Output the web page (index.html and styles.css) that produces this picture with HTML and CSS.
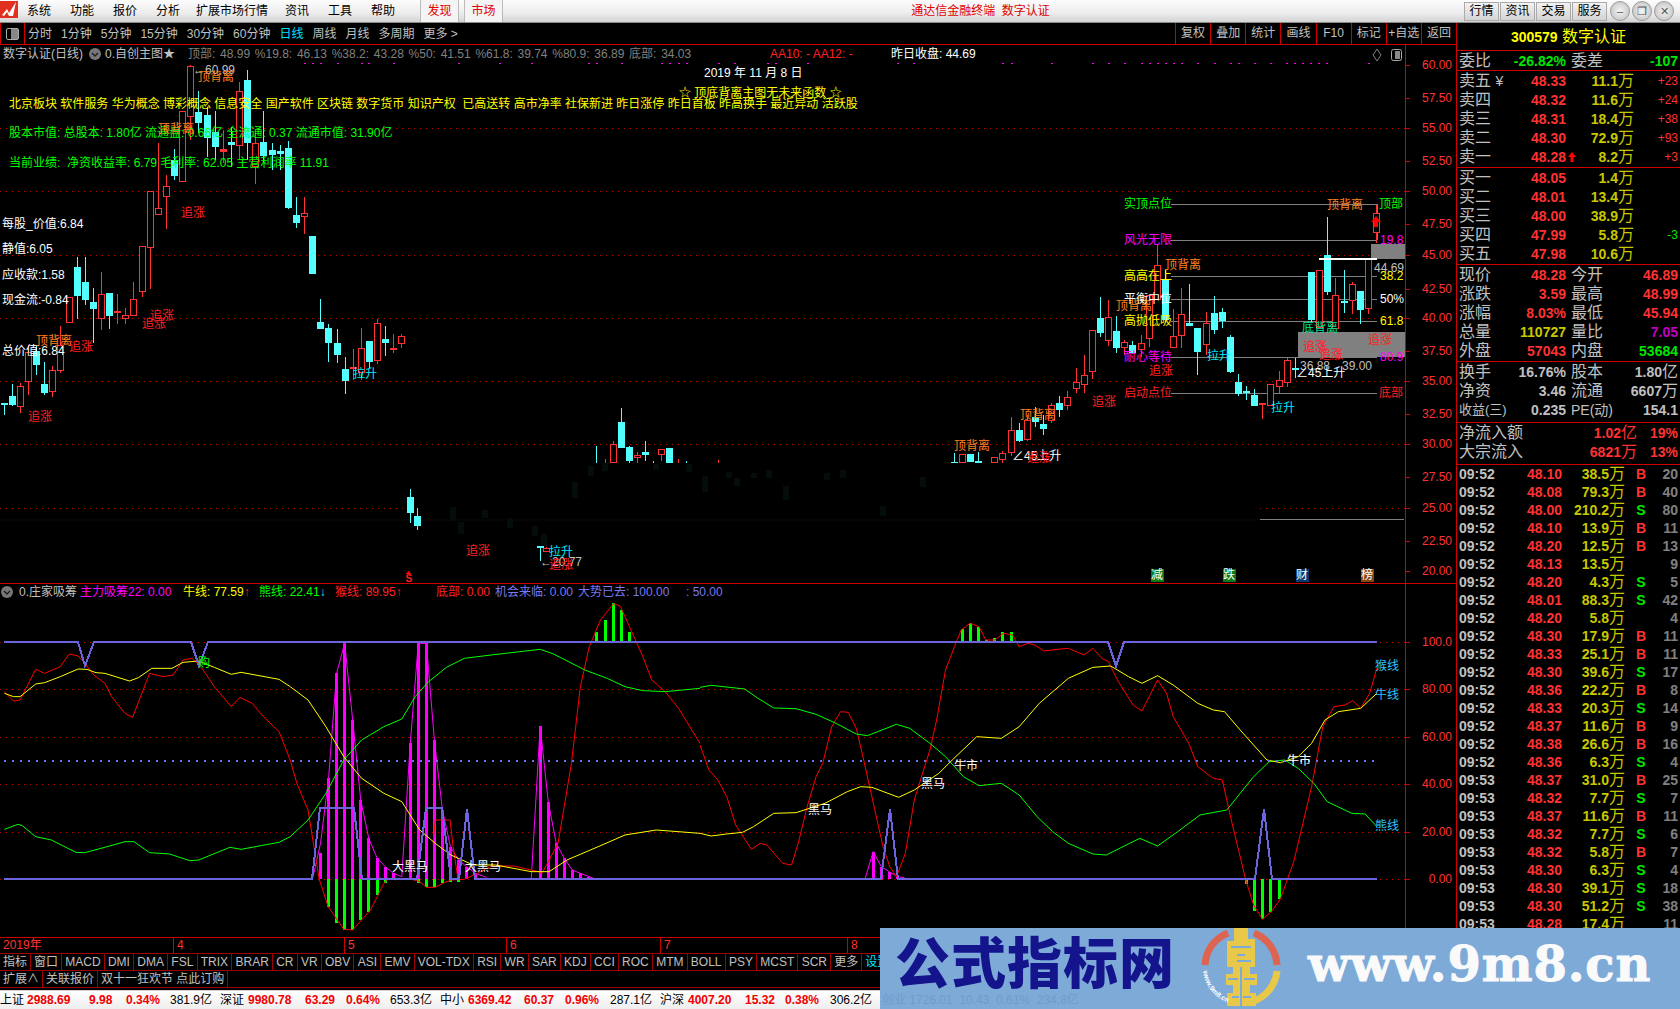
FILE: index.html
```html
<!DOCTYPE html>
<html lang="zh-CN">
<head>
<meta charset="utf-8">
<title>数字认证</title>
<link rel="stylesheet" href="styles.css">
</head>
<body>
<div class="app">
  <header class="titlebar">
    <svg class="applogo" viewBox="0 0 18 17"><rect width="18" height="17" fill="#e03020"/><path d="M2 14 L7 8 L9 12 L16 1 L13 15 L9 15 L7 11 L4 15z" fill="#fff"/></svg>
    <nav class="menu">
      <span>系统</span><span>功能</span><span>报价</span><span>分析</span><span class="menu-wide">扩展市场行情</span><span>资讯</span><span>工具</span><span>帮助</span>
    </nav>
    <span class="hot hot-first">发现</span><span class="hot">市场</span>
    <span class="apptitle">通达信金融终端&nbsp;&nbsp;数字认证</span>
    <div class="titleright">
      <span class="tbtn">行情</span><span class="tbtn">资讯</span><span class="tbtn">交易</span><span class="tbtn">服务</span>
      <span class="round">&#8211;</span><span class="round">&#10064;</span><span class="round">&#10005;</span>
    </div>
  </header>

  <div class="workspace">
    <section class="charts">
      <div class="toolbar">
        <div class="toolicon"><i></i></div>
        <div class="periods">
          <span>分时</span><span>1分钟</span><span>5分钟</span><span>15分钟</span><span>30分钟</span><span>60分钟</span><span class="on">日线</span><span>周线</span><span>月线</span><span>多周期</span><span>更多 &gt;</span>
        </div>
        <div class="toolright">
          <span>复权</span><span>叠加</span><span>统计</span><span>画线</span><span>F10</span><span>标记</span><span>+自选</span><span>返回</span>
        </div>
      </div>
      <div class="pane pane-main">
        <svg class="chart" viewBox="0 45 1456 538" width="1456" height="538">
          <path class="grid" d="M0 128.5H1405M0 191.5H1405M0 255.5H1405M0 318.5H1405M0 381.5H1405M0 444.5H1405M0 508.5H408M1260 508.5H1405"/>
          <path class="ghost" d="M450 507h6v14h-6zM458 522h6v12h-6zM482 510h6v8h-6zM507 518h6v10h-6zM532 526h6v10h-6zM541 534h6v12h-6zM572 482h6v16h-6zM588 466h6v10h-6zM602 463h6v8h-6zM653 464h6v6h-6zM686 464h6v8h-6zM702 476h6v16h-6zM726 472h6v6h-6zM734 478h6v8h-6zM751 473h6v5h-6zM766 470h6v8h-6zM783 486h6v14h-6zM824 473h6v7h-6zM840 470h6v8h-6zM880 506h6v10h-6zM920 477h6v10h-6z"/>
          <path class="ghost-line" d="M0 520H1260"/>
          <path class="level" d="M1171 204.5H1377V240M1171 240.5H1377M1171 276.5H1377M1171 299.5H1377M1171 321.5H1377M1171 357.5H1377M1171 393.5H1377"/>
          <path class="wr" d="M20.5 383V413M28.5 345V395M52.5 366V397M60.5 326V373M101.5 272V330M117.5 294V324M125.5 308V324M133.5 282V315M142.5 246V297M150.5 191V289M158.5 143V215M166.5 175V229M182.5 112V182M190.5 65V140M223.5 130V163M239.5 82V160M255.5 133V184M304.5 197V234M353.5 349V380M361.5 328V380M377.5 319V364M393.5 334V353M401.5 334V348M546.5 547V552M605.5 459V463M613.5 441V463M637.5 452V463M661.5 449V461M678.5 459V463M718.5 460V463M962.5 454V463M994.5 457V463M1002.5 451V463M1011.5 417V456M1027.5 415V441M1051.5 403V423M1067.5 391V410M1076.5 368V393M1084.5 355V393M1092.5 330V379M1108.5 300V346M1124.5 340V355M1141.5 335V357M1149.5 295V347M1157.5 245V300M1173.5 309V347M1181.5 288V348M1206.5 312V355M1262.5 404V419M1270.5 384V405M1279.5 371V393M1287.5 358V387M1319.5 270V327M1335.5 278V328M1352.5 282V314M1368.5 259V314M1376.5 205V243"/>
          <path class="wc" d="M4.5 404V415M12.5 384V406M36.5 345V375M44.5 362V395M77.5 257V319M85.5 257V305M93.5 288V343M109.5 293V329M174.5 149V180M198.5 91V133M207.5 107V157M215.5 111V160M231.5 127V167M247.5 70V160M263.5 111V163M272.5 143V170M280.5 145V170M288.5 141V209M296.5 197V228M320.5 299V329M328.5 324V362M337.5 329V363M345.5 357V394M369.5 341V368M385.5 326V356M410.5 489V523M417.5 508V530M540.5 547V561M596.5 446V463M621.5 408V448M629.5 446V463M645.5 441V461M653.5 461V463M686.5 461V463M954.5 453V463M978.5 452V463M1019.5 423V442M1035.5 407V427M1043.5 415V435M1059.5 396V417M1100.5 297V337M1116.5 316V353M1132.5 341V354M1165.5 270V322M1189.5 284V326M1197.5 328V375M1214.5 296V334M1222.5 308V328M1230.5 335V373M1238.5 374V396M1246.5 386V400M1254.5 389V406M1295.5 358V378M1327.5 217V295M1344.5 270V313M1360.5 291V324M1311.5 272V322"/>
          <path class="br" d="M17.5 386.5h6v20h-6zM25.5 352.5h6v29h-6zM49.5 370.5h6v21h-6zM57.5 345.5h6v25h-6zM66.5 297.5h6v25h-6zM98.5 294.5h6v24h-6zM122.5 315.5h6v3h-6zM130.5 299.5h6v16h-6zM139.5 246.5h6v45h-6zM147.5 191.5h6v56h-6zM155.5 208.5h6v6h-6zM163.5 186.5h6v10h-6zM179.5 111.5h6v70h-6zM187.5 66.5h6v50h-6zM236.5 91.5h6v54h-6zM252.5 143.5h6v23h-6zM301.5 213.5h6v3h-6zM358.5 348.5h6v24h-6zM374.5 323.5h6v37h-6zM398.5 336.5h6v7h-6zM543.5 548.5h6v3h-6zM610.5 444.5h6v18h-6zM634.5 455.5h6v2h-6zM658.5 449.5h6v5h-6zM959.5 454.5h6v8h-6zM991.5 457.5h6v5h-6zM999.5 453.5h6v6h-6zM1008.5 430.5h6v22h-6zM1024.5 420.5h6v19h-6zM1048.5 405.5h6v15h-6zM1064.5 397.5h6v8h-6zM1073.5 382.5h6v6h-6zM1081.5 375.5h6v9h-6zM1089.5 330.5h6v41h-6zM1105.5 317.5h6v23h-6zM1121.5 342.5h6v5h-6zM1138.5 343.5h6v6h-6zM1146.5 295.5h6v43h-6zM1154.5 265.5h6v34h-6zM1170.5 336.5h6v11h-6zM1178.5 314.5h6v21h-6zM1203.5 323.5h6v21h-6zM1267.5 384.5h6v21h-6zM1276.5 380.5h6v6h-6zM1284.5 360.5h6v22h-6zM1316.5 270.5h6v57h-6zM1332.5 295.5h6v33h-6zM1349.5 284.5h6v16h-6zM1365.5 259.5h6v49h-6zM1373.5 213.5h6v19h-6z"/>
          <path class="fr" d="M114 311h7v2h-7zM220 149h7v3h-7zM350 367h7v2h-7zM390 348h7v2h-7zM1259 403h7v2h-7z"/>
          <path class="bc" d="M1 403h7v2H1zM9 396h7v9H9zM33 351h7v14h-7zM41 384h7v9h-7zM74 267h7v29h-7zM82 282h7v18h-7zM90 302h7v7h-7zM106 293h7v23h-7zM171 160h7v16h-7zM195 112h7v11h-7zM204 115h7v23h-7zM212 132h7v15h-7zM228 142h7v3h-7zM244 80h7v63h-7zM260 142h7v14h-7zM269 150h7v5h-7zM277 151h7v3h-7zM285 148h7v60h-7zM293 215h7v8h-7zM309 236h7v38h-7zM317 322h7v7h-7zM325 328h7v15h-7zM334 343h7v12h-7zM342 369h7v12h-7zM366 341h7v21h-7zM382 339h7v4h-7zM407 497h7v16h-7zM414 516h7v10h-7zM537 546h7v2h-7zM618 422h7v26h-7zM626 447h7v14h-7zM642 452h7v3h-7zM666 448h7v15h-7zM951 462h7v1h-7zM967 454h7v8h-7zM975 461h7v2h-7zM1016 430h7v11h-7zM1032 417h7v5h-7zM1040 424h7v5h-7zM1056 403h7v7h-7zM1097 318h7v15h-7zM1113 331h7v17h-7zM1129 345h7v8h-7zM1162 280h7v40h-7zM1186 323h7v3h-7zM1194 328h7v24h-7zM1211 313h7v17h-7zM1219 312h7v9h-7zM1227 337h7v35h-7zM1235 382h7v12h-7zM1243 391h7v2h-7zM1251 395h7v11h-7zM1292 368h7v2h-7zM1308 272h7v48h-7zM1324 255h7v37h-7zM1341 301h7v2h-7zM1357 291h7v19h-7z"/>
          <rect class="shade" x="1371" y="244" width="34" height="15"/>
          <rect class="shade" x="1298" y="332" width="107" height="25"/>
          <path class="whiteline" d="M1319 258.5H1377"/>
          <path class="graybar" d="M1260 519.5H1404"/>
          <path class="uparrow" d="M1371 222L1376 216L1381 222H1378V227H1374V222z"/>
          <path class="magdots" d="M304 63.5h2M312 63.5h2M320 63.5h2M337 63.5h2M361 63.5h2M368 63.5h2M393 63.5h2M458 63.5h2M499 63.5h2M531 63.5h2M588 63.5h2M596 63.5h2M621 63.5h2M661 63.5h2M669 63.5h2M678 63.5h2M686 63.5h2M718 63.5h2M734 63.5h2M767 63.5h2M775 63.5h2M807 63.5h2M897 63.5h2M913 63.5h2M1002 63.5h2M1011 63.5h2M1051 63.5h2M1092 63.5h2M1108 63.5h2M1124 63.5h2M1141 63.5h2M1149 63.5h2M1157 63.5h2M1165 63.5h2M1173 63.5h2M1181 63.5h2M1197 63.5h2M1214 63.5h2M1230 63.5h2M1238 63.5h2M1254 63.5h2M1270 63.5h2M1286 63.5h2M1294 63.5h2M1302 63.5h2M1310 63.5h2M1318 63.5h2M1326 63.5h2M1368 63.5h2"/>
          <path class="axis" d="M1405.5 45V583M1405 65.5h5M1405 98.5h5M1405 128.5h5M1405 161.5h5M1405 191.5h5M1405 224.5h5M1405 255.5h5M1405 289.5h5M1405 318.5h5M1405 351.5h5M1405 381.5h5M1405 414.5h5M1405 444.5h5M1405 477.5h5M1405 508.5h5M1405 541.5h5M1405 571.5h5"/>
          <g class="txt">
            <text class="gy" x="3" y="54">数字认证(日线)</text>
            <circle class="knob" cx="95" cy="54" r="6"/><path class="knob-mark" d="M92 53l3 3 3-3"/>
            <text class="gy" x="105" y="54">0.自创主图★</text>
            <text class="dim" x="188" y="54">顶部: 48.99 %19.8: 46.13 %38.2: 43.28 %50: 41.51 %61.8: 39.74 %80.9: 36.89 底部: 34.03</text>
            <text class="rd" x="770" y="54">AA10: - AA12: -</text>
            <text class="wh" x="891" y="54">昨日收盘: 44.69</text>
            <path class="diamond" d="M1377 49l4 6-4 6-4-6z"/>
            <rect class="miniicon" x="1391.5" y="49.5" width="10" height="11" rx="2"/><rect class="miniicon-in" x="1395" y="51" width="5" height="8"/>
            <text class="wh" x="704" y="73">2019 年 11 月 8 日</text>
            <text class="ye" x="679" y="93">☆ 顶底背离主图无未来函数 ☆</text>
            <text class="ye" x="9" y="104">北京板块 软件服务 华为概念 博彩概念 信息安全 国产软件 区块链 数字货币 知识产权&#160;&#160;已高送转 高市净率 社保新进 昨日涨停 昨日首板 昨高换手 最近异动 活跃股</text>
            <text class="gr" x="9" y="133">股本市值: 总股本: 1.80亿 流通盘: 0.66亿 全流通: 0.37 流通市值: 31.90亿</text>
            <text class="gr" x="9" y="163">当前业绩:&#160;&#160;净资收益率: 6.79 毛利率: 62.05 主营利润率 11.91</text>
            <text class="gy" x="193" y="70">←60.99</text>
            <text class="or" x="198" y="77">顶背离</text>
            <text class="or" x="158" y="129">顶背离</text>
            <text class="rd" x="181" y="213">追涨</text>
            <text class="wh" x="2" y="224">每股_价值:6.84</text>
            <text class="wh" x="2" y="249">静值:6.05</text>
            <text class="wh" x="2" y="275">应收款:1.58</text>
            <text class="wh" x="2" y="300">现金流:-0.84</text>
            <text class="wh" x="2" y="351">总价值:6.84</text>
            <text class="or" x="36" y="341">顶背离</text>
            <text class="rd" x="69" y="347">追涨</text>
            <text class="rd" x="28" y="417">追涨</text>
            <text class="rd" x="142" y="324">追涨</text>
            <text class="rd" x="150" y="316">追涨</text>
            <text class="cy" x="353" y="374">拉升</text>
            <text class="rd" x="466" y="551">追涨</text>
            <text class="cy" x="549" y="552">拉升</text>
            <text class="gy" x="540" y="562">←20.77</text>
            <text class="rd" x="549" y="565">追涨</text>
            <path class="uparrow" d="M408.5 571l3 3h-6z"/>
            <text class="rd rd-bold" x="405.5" y="578">S</text>
            <text class="or" x="954" y="446">顶背离</text>
            <text class="wh" x="1012" y="456">∠45上升</text>
            <text class="rd" x="1027" y="458">追涨</text>
            <text class="or" x="1020" y="415">顶背离</text>
            <text class="rd" x="1092" y="402">追涨</text>
            <text class="rd" x="1149" y="371">追涨</text>
            <text class="or" x="1116" y="306">顶背离</text>
            <text class="or" x="1165" y="265">顶背离</text>
            <text class="or" x="1327" y="205">顶背离</text>
            <text class="gr" x="1124" y="204">实顶点位</text>
            <text class="mg" x="1124" y="240">风光无限</text>
            <text class="ye" x="1124" y="276">高高在上</text>
            <text class="wh" x="1124" y="299">平衡中位</text>
            <text class="ye" x="1124" y="321">高抛低吸</text>
            <text class="mg" x="1124" y="357">耐心等待</text>
            <text class="rd" x="1124" y="393">启动点位</text>
            <text class="gr" x="1379" y="204">顶部</text>
            <text class="mg" x="1380" y="240">19.8</text>
            <text class="gy" x="1374" y="268">44.69</text>
            <text class="ye" x="1380" y="276">38.2</text>
            <text class="wh" x="1380" y="299">50%</text>
            <text class="ye" x="1380" y="321">61.8</text>
            <text class="mg" x="1380" y="357">80.9</text>
            <text class="rd" x="1379" y="393">底部</text>
            <text class="teal" x="1302" y="328">底背离</text>
            <text class="rd" x="1303" y="347">追涨</text>
            <text class="rd" x="1319" y="355">追涨</text>
            <text class="rd" x="1368" y="340">追涨</text>
            <text class="cy" x="1207" y="356">拉升</text>
            <text class="gy" x="1300" y="366">36.88</text>
            <text class="gy" x="1342" y="366">39.00</text>
            <text class="wh" x="1296" y="373">∠45上升</text>
            <text class="cy" x="1271" y="408">拉升</text>
            <rect class="tagg" x="1151" y="569" width="13" height="13"/><text class="tagt" x="1151" y="575">减</text>
            <rect class="tagg" x="1223" y="569" width="13" height="13"/><text class="tagt" x="1223" y="575">跌</text>
            <rect class="tagb" x="1296" y="569" width="13" height="13"/><text class="tagt" x="1296" y="575">财</text>
            <rect class="tago" x="1361" y="569" width="13" height="13"/><text class="tagt" x="1361" y="575">榜</text>
            <text class="ax" x="1452" y="65">60.00</text><text class="ax" x="1452" y="98">57.50</text><text class="ax" x="1452" y="128">55.00</text><text class="ax" x="1452" y="161">52.50</text><text class="ax" x="1452" y="191">50.00</text><text class="ax" x="1452" y="224">47.50</text><text class="ax" x="1452" y="255">45.00</text><text class="ax" x="1452" y="289">42.50</text><text class="ax" x="1452" y="318">40.00</text><text class="ax" x="1452" y="351">37.50</text><text class="ax" x="1452" y="381">35.00</text><text class="ax" x="1452" y="414">32.50</text><text class="ax" x="1452" y="444">30.00</text><text class="ax" x="1452" y="477">27.50</text><text class="ax" x="1452" y="508">25.00</text><text class="ax" x="1452" y="541">22.50</text><text class="ax" x="1452" y="571">20.00</text>
          </g>
        </svg>
      </div>

      <div class="pane pane-ind">
        <svg class="chart" viewBox="0 584 1456 353" width="1456" height="353">
          <path class="grid" d="M0 642.5H1405M0 689.5H1405M0 737.5H1405M0 784.5H1405M0 832.5H1405M0 879.5H1405"/>
          <g transform="translate(0 580) scale(.44643 .33333)">
            <path class="bar-m" d="M718 897V820M736 897V595M754 897V280M772 897V190M790 897V420M808 897V660M826 897V775M845 897V835M863 897V860M881 897V880M919 897V490M937 897V190M955 897V190M973 897V480M991 897V690M1009 897V800M1027 897V840M1045 897V860M1065 897V880M1210 897V438M1228 897V665M1246 897V790M1264 897V835M1282 897V870M1300 897V880M1318 897V890"/>
            <path class="ln-m" d="M700 897L718 790L736 595L754 280L772 190L790 420L808 660L826 775L845 835L863 860L881 880L900 890L919 490L937 190L955 190L973 480L991 690L1009 800L1027 840L1045 860L1065 880L1090 892M1190 897L1210 438L1228 665L1246 790L1264 835L1282 870L1300 880L1330 895"/>
            <path class="bar-g" d="M736 897V980M754 897V1030M772 897V1050M790 897V1050M808 897V1020M826 897V995M845 897V945M863 897V910M937 897V908M955 897V922M973 897V922M991 897V908M1009 897V905M1027 897V905M1337 186V155M1356 186V120M1374 186V70M1392 186V90M1410 186V155"/>
            <path class="ln-r" d="M970 790L975 720L1008 720L1015 800L1025 890M10 335L30 363L45 360L80 268L100 280L135 260L155 222L175 228L190 250L210 285L235 310L250 350L280 400L297 412L335 280L365 290L388 285L410 240L430 235L450 260L480 320L518 380L537 352L565 370L590 410L625 455L650 540L665 610L690 690L715 897L735 980L770 1048L790 1050L810 1020L830 990L860 910L870 897L920 897L940 905L955 922L975 922L995 908L1010 900L1040 898L1070 880L1100 858L1150 858L1190 870L1215 878L1250 790L1280 550L1300 320L1320 200L1345 120L1375 70L1390 80L1410 140L1440 230L1460 300L1490 335L1520 385L1568 490"/>
            <path class="ln-g" d="M10 748L40 733L50 737L80 770L115 780L170 817L190 818L240 800L280 785L300 785L335 818L380 822L425 842L445 840L515 802L540 808L625 787L650 770L690 720L730 640L770 540L810 480L860 440L900 417L930 350L960 305L1000 262L1040 235L1100 225L1210 208L1240 222L1310 270L1360 295L1400 320L1440 332L1490 335L1568 325"/>
            <path class="ln-y" d="M10 340L30 350L45 350L80 312L100 308L135 290L175 267L195 268L215 278L235 280L290 303L310 293L340 265L385 265L410 247L445 243L480 262L518 283L540 277L625 298L650 320L690 360L730 440L770 530L810 595L860 640L900 665L940 750L975 790L1010 825L1060 855L1110 855L1190 875L1230 875L1270 840L1340 800L1400 765L1470 750L1568 760"/>
          </g>
          <g transform="translate(700 580) scale(.44643 .33333)">
            <path class="bar-m" d="M388 897V815M406 897V860M424 897V875M442 897V890"/>
            <path class="ln-m" d="M370 895L388 815L406 860L424 875L442 890L458 893"/>
            <path class="bar-g" d="M587 186V147M605 186V130M623 186V140M641 186V180M659 186V175M677 186V155M697 186V157M1224 897V912M1242 897V993M1260 897V1018M1278 897V995M1298 897V957"/>
            <path class="ln-r" d="M0 495L20 570L40 600L60 650L80 735L115 808L135 790L150 795L185 850L205 855L220 790L240 680L260 590L275 550L295 440L315 395L332 397L350 445L365 530L385 650L410 800L425 860L440 890L460 820L480 660L515 510L530 420L550 270L570 200L585 150L605 130L625 140L640 180L660 180L680 160L700 165L715 200L735 190L750 195L770 213L800 208L825 205L860 225L880 205L900 235L915 245L935 300L970 375L990 393L1025 300L1045 340L1060 410L1095 490L1115 560L1150 595L1170 600L1190 720L1222 897L1240 975L1260 1018L1280 995L1300 957L1330 845L1370 620L1395 440L1420 380L1445 375L1462 362L1480 385L1500 340L1516 265"/>
            <path class="ln-g" d="M0 322L25 316L100 327L130 355L165 384L215 386L260 403L300 427L350 462L375 467L440 433L470 445L515 490L550 530L590 590L625 617L675 610L715 645L755 710L790 755L825 790L880 822L910 825L985 775L1025 798L1070 755L1120 705L1180 690L1240 590L1275 545L1310 540L1340 565L1375 610L1405 665L1460 700L1490 702L1516 740"/>
            <path class="ln-y" d="M0 760L25 768L60 762L95 757L120 740L165 700L215 698L280 670L330 635L360 620L385 622L445 652L480 630L535 580L565 540L620 470L675 475L715 440L760 370L825 295L880 262L920 258L960 290L990 310L1025 287L1060 315L1115 370L1150 390L1175 395L1210 450L1270 540L1300 548L1340 530L1370 490L1400 420L1430 395L1480 385L1516 340"/>
          </g>
          <path class="dots" d="M4 760.5H1378"/>
          <path class="pur" d="M4 642H78L85 666L94 642H191L199 666L208 642H1108L1116 666L1124 642H1377M4 879H312L320 808L354 808L362 879H417L426 808L442 808L451 879H459L467 809L475 879H881L890 809L898 879H1255L1264 809L1272 879H1377"/>
          <path class="axis" d="M1405.5 584V937M1405 642.5h5M1405 689.5h5M1405 737.5h5M1405 784.5h5M1405 832.5h5M1405 879.5h5"/>
          <g class="txt">
            <circle class="knob" cx="7" cy="592" r="6"/><path class="knob-mark" d="M4 591l3 3 3-3"/>
            <text class="gy" x="19" y="592">0.庄家吸筹</text>
            <text class="mg" x="80" y="592">主力吸筹22: 0.00</text>
            <text class="ye" x="183" y="592">牛线: 77.59<tspan class="rd">↑</tspan></text>
            <text class="gr" x="259" y="592">熊线: 22.41<tspan class="cy">↓</tspan></text>
            <text class="rd" x="335" y="592">猴线: 89.95↑</text>
            <text class="rd" x="436" y="592">底部: 0.00</text>
            <text class="pu" x="495" y="592">机会来临: 0.00</text>
            <text class="pu" x="578" y="592">大势已去: 100.00</text>
            <text class="pu" x="686" y="592">: 50.00</text>
            <text class="gr" x="198" y="663">购</text>
            <text class="wh" x="392" y="867">大黑马</text>
            <text class="wh" x="465" y="867">大黑马</text>
            <text class="wh" x="808" y="810">黑马</text>
            <text class="wh" x="921" y="784">黑马</text>
            <text class="wh" x="954" y="766">牛市</text>
            <text class="wh" x="1287" y="761">牛市</text>
            <text class="bl" x="1375" y="666">猴线</text>
            <text class="bl" x="1375" y="695">牛线</text>
            <text class="bl" x="1375" y="826">熊线</text>
            <text class="ax" x="1452" y="642">100.0</text><text class="ax" x="1452" y="689">80.00</text><text class="ax" x="1452" y="737">60.00</text><text class="ax" x="1452" y="784">40.00</text><text class="ax" x="1452" y="832">20.00</text><text class="ax" x="1452" y="879">0.00</text>
          </g>
        </svg>
      </div>

      <div class="timeaxis"><span>2019年</span><span>4</span><span>5</span><span>6</span><span>7</span><span>8</span></div>
      <div class="tabs">
        <span class="tab cn">指标</span><span class="tab cn">窗口</span><span class="tab">MACD</span><span class="tab">DMI</span><span class="tab">DMA</span><span class="tab">FSL</span><span class="tab">TRIX</span><span class="tab">BRAR</span><span class="tab">CR</span><span class="tab">VR</span><span class="tab">OBV</span><span class="tab">ASI</span><span class="tab">EMV</span><span class="tab">VOL-TDX</span><span class="tab">RSI</span><span class="tab">WR</span><span class="tab">SAR</span><span class="tab">KDJ</span><span class="tab">CCI</span><span class="tab">ROC</span><span class="tab">MTM</span><span class="tab">BOLL</span><span class="tab">PSY</span><span class="tab">MCST</span><span class="tab">SCR</span><span class="tab cn">更多</span><span class="tab cn tab-set">设置</span>
      </div>
      <div class="tabs tabs-two">
        <span class="tab cn">扩展∧</span><span class="tab cn">关联报价</span><span class="tab cn">双十一狂欢节 点此订购</span>
      </div>
    </section>

    <aside class="quote">
      <div class="q-title"><b>300579</b> 数字认证</div>
      <div class="q-sec">
        <div class="q4"><span class="lb">委比</span><span class="gn">-26.82%</span><span class="lb">委差</span><span class="gn">-107</span></div>
      </div>
      <div class="q-sec q-pad1">
        <div class="bk"><span class="lb">卖五 <em>¥</em></span><span class="rv">48.33</span><span class="v">11.1<i>万</i></span><span class="d dr">+23</span></div>
        <div class="bk"><span class="lb">卖四</span><span class="rv">48.32</span><span class="v">11.6<i>万</i></span><span class="d dr">+24</span></div>
        <div class="bk"><span class="lb">卖三</span><span class="rv">48.31</span><span class="v">18.4<i>万</i></span><span class="d dr">+38</span></div>
        <div class="bk"><span class="lb">卖二</span><span class="rv">48.30</span><span class="v">72.9<i>万</i></span><span class="d dr">+93</span></div>
        <div class="bk"><span class="lb">卖一</span><span class="rv">48.28</span><svg class="up" viewBox="0 0 8 10" width="8" height="10"><path d="M4 0L8 5H5.5V10H2.5V5H0z"/></svg><span class="v">8.2<i>万</i></span><span class="d dr">+3</span></div>
      </div>
      <div class="q-sec q-pad1">
        <div class="bk"><span class="lb">买一</span><span class="rv">48.05</span><span class="v">1.4<i>万</i></span></div>
        <div class="bk"><span class="lb">买二</span><span class="rv">48.01</span><span class="v">13.4<i>万</i></span></div>
        <div class="bk"><span class="lb">买三</span><span class="rv">48.00</span><span class="v">38.9<i>万</i></span></div>
        <div class="bk"><span class="lb">买四</span><span class="rv">47.99</span><span class="v">5.8<i>万</i></span><span class="d dg">-3</span></div>
        <div class="bk"><span class="lb">买五</span><span class="rv">47.98</span><span class="v">10.6<i>万</i></span></div>
      </div>
      <div class="q-sec q-pad1">
        <div class="q4"><span class="lb">现价</span><span class="rv">48.28</span><span class="lb">今开</span><span class="rv">46.89</span></div>
        <div class="q4"><span class="lb">涨跌</span><span class="rv">3.59</span><span class="lb">最高</span><span class="rv">48.99</span></div>
        <div class="q4"><span class="lb">涨幅</span><span class="rv">8.03%</span><span class="lb">最低</span><span class="rv">45.94</span></div>
        <div class="q4"><span class="lb">总量</span><span class="yv">110727</span><span class="lb">量比</span><span class="pv">7.05</span></div>
        <div class="q4"><span class="lb">外盘</span><span class="rv">57043</span><span class="lb">内盘</span><span class="gn">53684</span></div>
      </div>
      <div class="q-sec q-pad">
        <div class="q4"><span class="lb">换手</span><span class="gv">16.76%</span><span class="lb">股本</span><span class="gv">1.80<i>亿</i></span></div>
        <div class="q4"><span class="lb">净资</span><span class="gv">3.46</span><span class="lb">流通</span><span class="gv">6607<i>万</i></span></div>
        <div class="q4"><span class="lb lb-sm">收益(三)</span><span class="gv">0.235</span><span class="lb lb-pe">PE(动)</span><span class="gv">154.1</span></div>
      </div>
      <div class="q-sec q-pad">
        <div class="fl"><span class="lb">净流入额</span><span class="rv">1.02<i>亿</i></span><span class="rv">19%</span></div>
        <div class="fl"><span class="lb">大宗流入</span><span class="rv">6821<i>万</i></span><span class="rv">13%</span></div>
      </div>
      <div class="ticks">
        <div class="t"><span>09:52</span><span class="rv">48.10</span><span class="v">38.5<i>万</i></span><span class="fr-b">B</span><span class="n">20</span></div>
        <div class="t"><span>09:52</span><span class="rv">48.08</span><span class="v">79.3<i>万</i></span><span class="fr-b">B</span><span class="n">40</span></div>
        <div class="t"><span>09:52</span><span class="rv">48.00</span><span class="v">210.2<i>万</i></span><span class="fr-s">S</span><span class="n">80</span></div>
        <div class="t"><span>09:52</span><span class="rv">48.10</span><span class="v">13.9<i>万</i></span><span class="fr-b">B</span><span class="n">11</span></div>
        <div class="t"><span>09:52</span><span class="rv">48.20</span><span class="v">12.5<i>万</i></span><span class="fr-b">B</span><span class="n">13</span></div>
        <div class="t"><span>09:52</span><span class="rv">48.13</span><span class="v">13.5<i>万</i></span><span></span><span class="n">9</span></div>
        <div class="t"><span>09:52</span><span class="rv">48.20</span><span class="v">4.3<i>万</i></span><span class="fr-s">S</span><span class="n">5</span></div>
        <div class="t"><span>09:52</span><span class="rv">48.01</span><span class="v">88.3<i>万</i></span><span class="fr-s">S</span><span class="n">42</span></div>
        <div class="t"><span>09:52</span><span class="rv">48.20</span><span class="v">5.8<i>万</i></span><span></span><span class="n">4</span></div>
        <div class="t"><span>09:52</span><span class="rv">48.30</span><span class="v">17.9<i>万</i></span><span class="fr-b">B</span><span class="n">11</span></div>
        <div class="t"><span>09:52</span><span class="rv">48.33</span><span class="v">25.1<i>万</i></span><span class="fr-b">B</span><span class="n">11</span></div>
        <div class="t"><span>09:52</span><span class="rv">48.30</span><span class="v">39.6<i>万</i></span><span class="fr-s">S</span><span class="n">17</span></div>
        <div class="t"><span>09:52</span><span class="rv">48.36</span><span class="v">22.2<i>万</i></span><span class="fr-b">B</span><span class="n">8</span></div>
        <div class="t"><span>09:52</span><span class="rv">48.33</span><span class="v">20.3<i>万</i></span><span class="fr-s">S</span><span class="n">14</span></div>
        <div class="t"><span>09:52</span><span class="rv">48.37</span><span class="v">11.6<i>万</i></span><span class="fr-b">B</span><span class="n">9</span></div>
        <div class="t"><span>09:52</span><span class="rv">48.38</span><span class="v">26.6<i>万</i></span><span class="fr-b">B</span><span class="n">16</span></div>
        <div class="t"><span>09:52</span><span class="rv">48.36</span><span class="v">6.3<i>万</i></span><span class="fr-s">S</span><span class="n">4</span></div>
        <div class="t"><span>09:53</span><span class="rv">48.37</span><span class="v">31.0<i>万</i></span><span class="fr-b">B</span><span class="n">25</span></div>
        <div class="t"><span>09:53</span><span class="rv">48.32</span><span class="v">7.7<i>万</i></span><span class="fr-s">S</span><span class="n">7</span></div>
        <div class="t"><span>09:53</span><span class="rv">48.37</span><span class="v">11.6<i>万</i></span><span class="fr-b">B</span><span class="n">11</span></div>
        <div class="t"><span>09:53</span><span class="rv">48.32</span><span class="v">7.7<i>万</i></span><span class="fr-s">S</span><span class="n">6</span></div>
        <div class="t"><span>09:53</span><span class="rv">48.32</span><span class="v">5.8<i>万</i></span><span class="fr-b">B</span><span class="n">7</span></div>
        <div class="t"><span>09:53</span><span class="rv">48.30</span><span class="v">6.3<i>万</i></span><span class="fr-s">S</span><span class="n">4</span></div>
        <div class="t"><span>09:53</span><span class="rv">48.30</span><span class="v">39.1<i>万</i></span><span class="fr-s">S</span><span class="n">18</span></div>
        <div class="t"><span>09:53</span><span class="rv">48.30</span><span class="v">51.2<i>万</i></span><span class="fr-s">S</span><span class="n">38</span></div>
        <div class="t"><span>09:53</span><span class="rv">48.28</span><span class="v">17.4<i>万</i></span><span></span><span class="n">11</span></div>
      </div>
    </aside>
  </div>

  <footer class="status">
    <span>上证</span><b>2988.69</b><b>9.98</b><b>0.34%</b><span>381.9亿</span>
    <span>深证</span><b>9980.78</b><b>63.29</b><b>0.64%</b><span>653.3亿</span>
    <span>中小</span><b>6369.42</b><b>60.37</b><b>0.96%</b><span>287.1亿</span>
    <span>沪深</span><b>4007.20</b><b>15.32</b><b>0.38%</b><span>306.2亿</span>
  </footer>

  <aside class="stamp">
    <span class="stamp-ghost">创业 1726.01&nbsp;&nbsp;10.43&nbsp;&nbsp;0.61%&nbsp;&nbsp;234.8亿</span>
    <span class="stamp-cn">公式指标网</span>
    <svg class="stamp-logo" viewBox="0 0 80 80" width="80" height="80">
      <path class="lg-red" d="M4 38A36 36 0 0 1 27 6M53 6A36 36 0 0 1 76 38"/>
      <path class="lg-yel" d="M76 44A36 36 0 0 1 53 74"/>
      <path class="lg-fig" d="M33 1H47V12H54V40H49V47H56V58H49V66H55V79H26V66H32V58H25V47H32V40H26V14H33z"/>
      <path class="lg-cut" d="M30 20H50M36 28H44M36 34H50M27 52H37M43 52H54M31 70H38M42 70H50M40 40V80"/>
      <path id="lgarc" class="lg-none" d="M2 44A38 38 0 0 0 28 76"/>
      <text class="lg-txt"><textPath href="#lgarc">www.9m8.cn</textPath></text>
    </svg>
    <span class="stamp-url">www.9m8.cn</span>
  </aside>
</div>
</body>
</html>
```

FILE: styles.css
```css
* { box-sizing: border-box; }
html, body { margin: 0; padding: 0; background: #000; }
body {
  width: 1680px; height: 1009px; overflow: hidden;
  font: 12px/1 "Liberation Sans", "Noto Sans CJK SC", sans-serif;
  color: #c0c0c0;
}
.app { position: relative; width: 1680px; height: 1009px; display: flex; flex-direction: column; overflow: hidden; }

/* title bar */
.titlebar {
  flex: 0 0 23px; display: flex; align-items: center; color: #000;
  background: linear-gradient(#fdfdfd, #ececec 60%, #d4d4d4);
  border-bottom: 1px solid #8a8a8a; font-size: 12px;
}
.applogo { width: 18px; height: 17px; margin: 0 9px 3px 0; flex: none; }
.menu { display: flex; gap: 19px; }
.menu-wide { margin: 0 -2px 0 -3px; }
.hot { color: #e00000; height: 22px; line-height: 22px; margin-left: 5px; flex: none;
  border-left: 1px solid #bbb; border-right: 1px solid #bbb; background: #f4f4f4; width: 39px; text-align: center; }
.hot-first { margin-left: 25px; }
.apptitle { color: #e00000; margin-left: 408px; }
.titleright { margin-left: auto; display: flex; align-items: center; gap: 1px; padding-right: 6px; }
.tbtn { width: 35px; height: 19px; line-height: 17px; text-align: center; border: 1px solid #aaa; background: linear-gradient(#f2f2f2, #d4d4d4); }
.round { width: 20px; height: 20px; border-radius: 50%; border: 1px solid #999; background: radial-gradient(#f4f4f4, #bdbdbd); margin-left: 1px; text-align: center; line-height: 18px; font-size: 11px; color: #555; }
.tbtn + .round { margin-left: 2px; }

/* work area */
.workspace { flex: 1; display: flex; min-height: 0; }
.charts { flex: 0 0 1456px; display: flex; flex-direction: column; min-height: 0; }

/* tool bar */
.toolbar { flex: 0 0 22px; display: flex; align-items: center; background: #000; border-bottom: 1px solid #d00000; }
.toolicon { width: 25px; height: 21px; border-left: 1px solid #d00000; border-right: 1px solid #d00000; display: flex; align-items: center; justify-content: center; }
.toolicon i { width: 13px; height: 12px; border: 1px solid #aaa; border-radius: 2px; background: linear-gradient(90deg, #000 40%, #888 40%); }
.periods { display: flex; gap: 9px; margin-left: 3px; }
.periods .on { color: #00e0ff; }
.toolright { display: flex; margin-left: auto; width: 281px; height: 21px; }
.toolright span { flex: 1; text-align: center; line-height: 21px; border-left: 1px solid #d00000; }

.pane { flex: none; position: relative; overflow: hidden; border-bottom: 1px solid #d00000; }
.pane-main { height: 539px; }
.pane-ind { height: 354px; }
.chart { display: block; }

/* chart drawing */
.grid { stroke: #c00000; stroke-dasharray: 1 5; fill: none; }
.ghost { fill: #050c0c; }
.ghost-line { stroke: #080808; fill: none; }
.level { stroke: #808080; fill: none; }
.wr, .wc, .br, .fr, .bc, .axis, .whiteline, .graybar, .bar-m, .bar-g, .ln-m, .ln-r, .ln-g, .ln-y, .pur, .level, .dots { shape-rendering: crispEdges; }
.wr { stroke: #ff3232; fill: none; }
.wc { stroke: #54ffff; fill: none; }
.br { stroke: #ff3232; fill: #000; }
.fr { fill: #ff3232; }
.bc { fill: #54ffff; }
.shade { fill: #808080; }
.whiteline { stroke: #fff; stroke-width: 2; fill: none; }
.graybar { stroke: #808080; fill: none; }
.uparrow { fill: #ff0000; }
.magdots { stroke: #ff00ff; fill: none; }
.axis { stroke: #d00000; fill: none; }
.diamond { fill: none; stroke: #808080; }
.miniicon { fill: none; stroke: #aaa; }
.miniicon-in { fill: #888; }
.knob { fill: #777; }
.knob-mark { fill: none; stroke: #222; stroke-width: 1.5; }
.txt text { font-size: 12px; dominant-baseline: central; }
.txt .dim { word-spacing: 1.4px; }
.gy { fill: #c0c0c0; } .dim { fill: #808080; } .rd { fill: #ff2020; } .wh { fill: #fff; }
.ye { fill: #ffff00; } .gr { fill: #00ff00; } .or { fill: #ff8020; } .cy { fill: #00e8ff; }
.mg { fill: #ff00ff; } .teal { fill: #00e890; } .pu { fill: #7878f0; } .bl { fill: #30c0ff; }
.ax { fill: #ff3232; text-anchor: end; }
.txt .rd-bold { font-weight: bold; font-size: 10px; }
.tagg { fill: #087a18; } .tagb { fill: #06386e; } .tago { fill: #86480e; }
.tagt { fill: #fff; }
.bar-m, .bar-g, .ln-m, .ln-r, .ln-g, .ln-y { vector-effect: non-scaling-stroke; fill: none; }
.bar-m { stroke: #ff00ff; stroke-width: 3; }
.bar-g { stroke: #00ff00; stroke-width: 3; }
.ln-m { stroke: #ff00ff; stroke-width: 1; }
.ln-r { stroke: #ff0000; stroke-width: 1; }
.ln-g { stroke: #00ff00; stroke-width: 1; }
.ln-y { stroke: #ffff00; stroke-width: 1; }
.dots { stroke: #7070f0; stroke-width: 2; stroke-dasharray: 2 6; fill: none; }
.pur { stroke: #6c64dc; stroke-width: 2; fill: none; }

/* time axis */
.timeaxis { flex: 0 0 15px; display: grid; grid-template-columns: 173px 171px 162px 154px 187px 1fr; color: #ff3232; line-height: 15px; }
.timeaxis span { padding-left: 3px; }
.timeaxis span + span { border-left: 1px solid #d00000; }

/* tabs */
.tabs { flex: 0 0 18px; display: flex; overflow: hidden; border-top: 1px solid #a00000; border-bottom: 1px solid #a00000; }
.tabs-two { flex: 0 0 17px; border-top: 0; }
.tab { flex: none; padding: 0 3.2px; line-height: 16px; border-right: 1px solid #a00000; white-space: pre; }
.tab.cn { padding: 0 3px; }
.tab-set { color: #00e8ff; }

/* quote panel */
.quote { flex: 0 0 224px; border-left: 1px solid #d00000; min-height: 0; overflow: hidden; }
.quote i { font-style: normal; font-size: 16px; font-weight: normal; }
.q-title { height: 28px; line-height: 27px; text-align: center; color: #ffff00; font-size: 16px; border-bottom: 1px solid #d00000; }
.q-title b { font-size: 14px; }
.q-sec { padding-left: 2px; padding-right: 2px; border-bottom: 1px solid #d00000; }
.q-pad1 { padding-bottom: 1px; }
.q-pad { padding-bottom: 3px; }
.q4, .bk, .fl, .t { display: grid; align-items: center; font-size: 14px; font-weight: bold; white-space: nowrap; }
.q4, .bk, .fl { height: 19px; }
.q4 { grid-template-columns: 50px 57px 5px 50px 57px; }
.q4 > :nth-child(3) { grid-column: 4; }
.bk { grid-template-columns: 50px 57px 10px 58px 44px; }
.bk .v { grid-column: 4; }
.fl { grid-template-columns: 90px 88px 41px; }
.lb { color: #c0c0c0; font-size: 16px; font-weight: normal; }
.lb em { font-style: normal; font-size: 14px; }
.q4 .lb-sm { font-size: 13px; }
.q4 .lb-pe { font-size: 14px; }
.q4 > :nth-child(even), .bk .rv, .bk .v, .bk .d, .fl > :not(.lb), .t > :not(:first-child) { text-align: right; }
.rv { color: #ff3232; } .gn { color: #00e600; } .yv { color: #c8c800; } .pv { color: #c000c0; } .gv { color: #c0c0c0; }
.v { color: #c8c800; }
.d { font-size: 12px; font-weight: normal; }
.dr { color: #ff3232; } .dg { color: #00e600; }
.up { fill: #ff0000; margin-left: 2px; }
.ticks { padding: 0 2px; }
.t { height: 18px; grid-template-columns: 41px 62px 63px 32px 21px; color: #c0c0c0; }
.t .fr-b, .t .fr-s { text-align: center; }
.fr-b { color: #ff3232; } .fr-s { color: #00e600; }
.t .n { color: #808080; }

/* status */
.status {
  flex: 0 0 19px; display: grid; align-items: center; color: #000;
  grid-template-columns: 27px 62px 37px 44px 50px 28px 57px 41px 44px 50px 28px 56px 41px 45px 50px 28px 57px 40px 45px 50px;
  background: linear-gradient(#fff, #eee); border-top: 1px solid #ccc;
}
.status b { color: #f00000; }

/* watermark */
.stamp { position: absolute; left: 880px; top: 928px; width: 800px; height: 81px; background: #7eaad8; overflow: hidden; }
.stamp-ghost { position: absolute; left: 2px; bottom: 3px; color: #6f9ccc; font-size: 12px; }
.stamp-cn { position: absolute; left: 15px; top: 6px; color: #14148c; font-size: 55px; line-height: 60px; font-weight: 900; letter-spacing: 1px; white-space: nowrap; }
.stamp-logo { position: absolute; left: 321px; top: -1px; }
.stamp-url { position: absolute; left: 428px; top: 6px; color: #fafafa; font: bold 48px/60px "DejaVu Serif", serif; letter-spacing: .9px; white-space: nowrap; -webkit-text-stroke: 1px #fafafa; }
.lg-red { fill: none; stroke: #dc6450; stroke-width: 7; }
.lg-yel { fill: none; stroke: #e8c848; stroke-width: 7; }
.lg-fig { fill: #e8c848; }
.lg-cut { fill: none; stroke: #7eaad8; stroke-width: 2; }
.lg-none { fill: none; }
.lg-txt { fill: #fff; font-size: 7px; font-weight: bold; }
```
